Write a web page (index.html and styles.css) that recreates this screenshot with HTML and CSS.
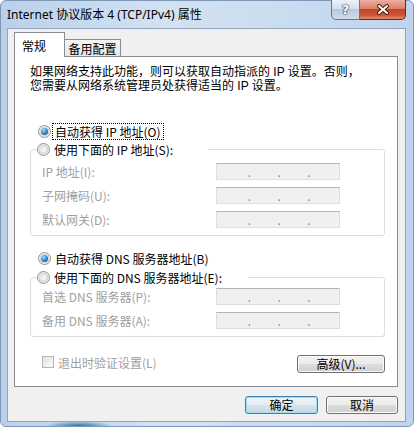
FILE: index.html
```html
<!DOCTYPE html>
<html lang="zh-CN">
<head>
<meta charset="UTF-8">
<meta name="viewport" content="width=device-width, initial-scale=1.0">
<title>Internet 协议版本 4 (TCP/IPv4) 属性</title>
<link rel="stylesheet" href="styles.css">
</head>
<body>

<div class="window">
    <div class="titlebar">
        <div class="title">Internet 协议版本 4 (TCP/IPv4) 属性</div>
        <div class="caption-buttons">
            <div class="cap-btn help">?</div>
            <div class="cap-btn close">
                <svg width="12" height="11" viewBox="0 0 12 11">
                    <path d="M2 2 L10 9 M10 2 L2 9" stroke="#4a1a10" stroke-width="4" stroke-linecap="round"/>
                    <path d="M2 2 L10 9 M10 2 L2 9" stroke="#fff" stroke-width="2" stroke-linecap="round"/>
                </svg>
            </div>
        </div>
    </div>

    <div class="client">
        <div class="tabs">
            <div class="tab active">常规</div>
            <div class="tab">备用配置</div>
        </div>

        <div class="panel">
            <p class="intro">如果网络支持此功能，则可以获取自动指派的 IP 设置。否则，<br>您需要从网络系统管理员处获得适当的 IP 设置。</p>

            <div class="radio-row first"><span class="radio checked"></span><span class="focus">自动获得 IP 地址(O)</span></div>

            <fieldset class="group">
                <legend class="legend-ip"><span class="radio-row"><span class="radio"></span><span class="text">使用下面的 IP 地址(S):</span></span></legend>
                <div class="fields ip-fields">
                    <div class="field-row"><span class="field-label">IP 地址(I):</span><div class="ip"><span class="seg"></span><span class="dot">.</span><span class="seg"></span><span class="dot">.</span><span class="seg"></span><span class="dot">.</span><span class="seg"></span></div></div>
                    <div class="field-row"><span class="field-label">子网掩码(U):</span><div class="ip"><span class="seg"></span><span class="dot">.</span><span class="seg"></span><span class="dot">.</span><span class="seg"></span><span class="dot">.</span><span class="seg"></span></div></div>
                    <div class="field-row"><span class="field-label">默认网关(D):</span><div class="ip"><span class="seg"></span><span class="dot">.</span><span class="seg"></span><span class="dot">.</span><span class="seg"></span><span class="dot">.</span><span class="seg"></span></div></div>
                </div>
            </fieldset>

            <div class="radio-row dns-auto"><span class="radio checked"></span><span class="text">自动获得 DNS 服务器地址(B)</span></div>

            <fieldset class="group dns-group">
                <legend class="legend-dns"><span class="radio-row"><span class="radio"></span><span class="text">使用下面的 DNS 服务器地址(E):</span></span></legend>
                <div class="fields dns-fields">
                    <div class="field-row"><span class="field-label">首选 DNS 服务器(P):</span><div class="ip"><span class="seg"></span><span class="dot">.</span><span class="seg"></span><span class="dot">.</span><span class="seg"></span><span class="dot">.</span><span class="seg"></span></div></div>
                    <div class="field-row"><span class="field-label">备用 DNS 服务器(A):</span><div class="ip"><span class="seg"></span><span class="dot">.</span><span class="seg"></span><span class="dot">.</span><span class="seg"></span><span class="dot">.</span><span class="seg"></span></div></div>
                </div>
            </fieldset>

            <div class="bottom-row">
                <div class="check-row"><span class="checkbox"></span><span>退出时验证设置(L)</span></div>
                <button class="btn advanced">高级(V)...</button>
            </div>
        </div>

        <div class="actions">
            <button class="btn ok">确定</button>
            <button class="btn cancel">取消</button>
        </div>
    </div>
</div>

</body>
</html>
```

FILE: styles.css
```css
* {
    box-sizing: border-box;
}
body {
    margin: 0;
    background: #fff;
    font-family: "Noto Sans CJK SC", sans-serif;
    font-size: 12px;
    color: #000;
}
.window {
    width: 414px;
    height: 427px;
    border: 1px solid #7d97b6;
    border-radius: 6px;
    padding: 0 7px 4px 6px;
    display: flex;
    flex-direction: column;
    background:
        radial-gradient(ellipse 34px 5px at 78px 100%, #2a6bab, rgba(42, 107, 171, 0)),
        linear-gradient(to right, #bad0ea, #d3e2f2 40%, #cadcef 70%, #bfd4ec);
}
.titlebar {
    height: 27px;
    display: flex;
    justify-content: space-between;
    align-items: flex-start;
}
.title {
    font-family: "Noto Sans", "Noto Sans CJK SC", sans-serif;
    font-size: 12px;
    line-height: 16px;
    padding-top: 6px;
}
.caption-buttons {
    display: flex;
    margin-top: -1px;
}
.cap-btn {
    height: 20px;
    display: flex;
    justify-content: center;
    align-items: center;
}
.help {
    width: 29px;
    border: 1px solid #66788f;
    border-top: none;
    border-radius: 0 0 0 5px;
    background: linear-gradient(#e9f0f8, #d5e1ef 45%, #b9cadf 50%, #cddbeb);
    color: #fff;
    font-family: "DejaVu Sans", sans-serif;
    font-weight: bold;
    font-size: 13px;
    text-shadow: 0 0 1px #2d3d52, 0 0 1px #2d3d52, 0 0 2px #2d3d52;
}
.close {
    width: 46px;
    border: 1px solid #5b2c22;
    border-top: none;
    border-left: none;
    border-radius: 0 0 5px 0;
    background: linear-gradient(#eaae9f, #dc8168 45%, #c4432a 50%, #cf5638 80%, #e58c6e);
}

.client {
    flex: 1;
    background: #f0f0f0;
    border: 1px solid #8ea3bd;
    padding: 3px 7px 7px 6px;
}
.tabs {
    display: flex;
    align-items: flex-end;
    height: 24px;
}
.tab {
    border: 1px solid #898c95;
    border-bottom: none;
    line-height: 14px;
}
.tab.active {
    position: relative;
    z-index: 1;
    width: 51px;
    height: 25px;
    margin-bottom: -1px;
    padding: 6px 0 0 7px;
    background: #fff;
}
.tab:not(.active) {
    width: 56px;
    height: 17px;
    padding-top: 2px;
    text-align: center;
    border-left: none;
    background: linear-gradient(#f4f4f4, #e6e6e6);
}
.panel {
    height: 331px;
    background: #fff;
    border: 1px solid #898c95;
    padding: 8px 12px 0 15px;
}
.intro {
    margin: 0;
    font-family: "Liberation Sans", "Noto Sans CJK SC", sans-serif;
    line-height: 14px;
    white-space: nowrap;
}

.radio-row {
    display: flex;
    align-items: center;
    height: 18px;
    padding-left: 8px;
    white-space: nowrap;
}
.radio-row.first {
    margin-top: 29px;
}
.radio-row.dns-auto {
    margin-top: 13px;
}
.radio {
    width: 13px;
    height: 13px;
    flex-shrink: 0;
    border-radius: 50%;
    border: 1px solid #8e9296;
    background: radial-gradient(circle, #f2f2f2 0, #f2f2f2 2px, #d6d6d6 4.5px, #fdfdfd 5.5px);
    display: flex;
    justify-content: center;
    align-items: center;
    margin-right: 2px;
}
.radio.checked::after {
    content: "";
    width: 7px;
    height: 7px;
    border-radius: 50%;
    background: radial-gradient(circle at 35% 30%, #9bdcfb, #3484c6 55%, #0e3e6c);
}
.focus {
    outline: 1px dotted #000;
    outline-offset: 0;
    padding: 0 2px;
    line-height: 15px;
}
.text {
    padding-left: 2px;
}

.group {
    margin: 0;
    padding: 0;
    min-width: 0;
    border: 1px solid #d5dfe5;
    border-radius: 3px;
}
.group legend {
    padding: 0;
    margin-left: 6px;
    height: 18px;
}
.group legend .radio-row {
    padding-left: 0;
}
.legend-ip {
    width: 171px;
}
.legend-dns {
    width: 211px;
}
.dns-group {
    margin-top: 1px;
}
.fields {
    display: flex;
    flex-direction: column;
    gap: 7px;
    padding: 5px 0 7px 11px;
}
.dns-fields {
    padding-top: 2px;
}
.field-row {
    display: flex;
    align-items: center;
    height: 17px;
}
.field-label {
    width: 174px;
    color: #a0a0a0;
    white-space: nowrap;
}
.ip {
    width: 124px;
    height: 17px;
    display: flex;
    align-items: center;
    padding: 0 2px 0 4px;
    background: #f0f0f0;
    border: 1px solid #dedede;
    border-top-color: #b4b4b4;
}
.seg {
    flex: 1;
}
.dot {
    color: #8c8c8c;
    font-size: 12px;
    line-height: 17px;
    width: 3px;
    text-align: center;
}

.bottom-row {
    display: flex;
    justify-content: space-between;
    align-items: flex-start;
    margin-top: 18px;
    padding-left: 12px;
}
.check-row {
    display: flex;
    align-items: center;
    color: #a0a0a0;
    height: 14px;
}
.checkbox {
    width: 12px;
    height: 12px;
    border: 1px solid #b6b6b6;
    background: linear-gradient(135deg, #e2e2e2, #fbfbfb);
    margin-right: 4px;
}

.btn {
    font: inherit;
    font-size: 12px;
    color: #000;
    height: 18px;
    padding: 0;
    line-height: 14px;
    border: 1px solid #707070;
    border-radius: 3px;
    background: linear-gradient(#f2f2f2, #ebebeb 50%, #dddddd 51%, #cfcfcf);
    box-shadow: inset 0 0 0 1px #fbfbfb;
}
.advanced {
    width: 88px;
}
.actions {
    display: flex;
    justify-content: flex-end;
    gap: 8px;
    margin-top: 9px;
}
.ok {
    width: 73px;
    border-color: #3c7fb1;
    box-shadow: inset 0 0 0 1px #9fdcf7;
    background: linear-gradient(#eef4f8, #e4edf3 50%, #d4e2ec 51%, #c9d9e4);
}
.cancel {
    width: 72px;
}
```
